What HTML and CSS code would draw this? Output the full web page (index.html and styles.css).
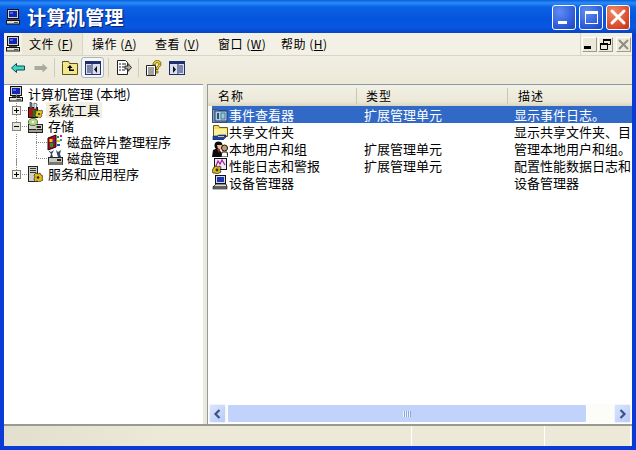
FILE: index.html
```html
<!DOCTYPE html>
<html lang="zh-CN">
<head>
<meta charset="utf-8">
<title>计算机管理</title>
<link rel="stylesheet" href="styles.css">
</head>
<body>
<svg class="defs" width="0" height="0">
  <symbol id="pc" viewBox="0 0 16 16">
    <rect x="2.500" y="0.500" width="11" height="9" fill="#d2d2c8" stroke="#111"/>
    <rect x="4" y="2" width="8" height="6" fill="#1424b4"/>
    <rect x="5" y="3" width="3" height="2" fill="#3f6fe0"/>
    <rect x="4" y="10" width="8" height="1" fill="#444"/>
    <rect x="1.500" y="11.500" width="13" height="3.500" fill="#dcdcd0" stroke="#111"/>
    <rect x="9" y="13" width="4" height="1" fill="#555"/>
  </symbol>
  <symbol id="tools" viewBox="0 0 16 16">
    <rect x="1.500" y="5.500" width="9" height="10" fill="#b01414" stroke="#111"/>
    <rect x="6" y="8" width="4" height="7" fill="#157a28"/>
    <path d="M3 0l2 1v5H3z" fill="#7d8494" stroke="#222" stroke-width=".6"/>
    <path d="M7 1l3 1-1 5H7z" fill="#eee" stroke="#222" stroke-width=".6"/>
    <path d="M10 9l2-1 1 1 2-1 1 3-2 1 1 2-2 2-2-1-2 0-1-2 1-2-1-2z" fill="#e8c414" stroke="#222" stroke-width=".6"/>
    <circle cx="12" cy="12" r="1" fill="#222"/>
  </symbol>
  <symbol id="storage" viewBox="0 0 16 16">
    <rect x="1.500" y="6.500" width="14" height="8" fill="#d2d2c9" stroke="#222"/>
    <rect x="1.500" y="11.500" width="14" height="3" fill="#a0a097" stroke="#222"/>
    <rect x="9" y="8" width="5" height="2" fill="#222"/>
    <ellipse cx="6" cy="4" rx="4.500" ry="3.500" fill="#b4d888" stroke="#56733c"/>
    <circle cx="6" cy="4" r="1" fill="#fff"/>
  </symbol>
  <symbol id="defrag" viewBox="0 0 16 16">
    <path d="M1 4l8-3v12l-8 3z" fill="#a80c20" stroke="#300"/>
    <rect x="2.500" y="5" width="3" height="3" fill="#f4c814"/>
    <rect x="3" y="9" width="3" height="4" fill="#189a36"/>
    <rect x="6" y="6" width="2" height="3" fill="#2030c0"/>
    <rect x="10" y="2" width="2" height="2" fill="#14963a"/>
    <rect x="13" y="1" width="2" height="2" fill="#d414a0"/>
    <rect x="10" y="6" width="3" height="2" fill="#ecc814"/>
    <rect x="10" y="10" width="3" height="2" fill="#1c48d0"/>
    <rect x="13" y="5" width="2" height="2" fill="#14a0c4"/>
  </symbol>
  <symbol id="disk" viewBox="0 0 16 16">
    <rect x="1.500" y="7.500" width="14" height="7" fill="#c7c7bd" stroke="#222"/>
    <rect x="1.500" y="12" width="14" height="3" fill="#77776f"/>
    <path d="M1 0l3 2 3-2-2 4 1 3H3L4 4z" fill="#36466e"/>
    <path d="M9 0l2 2 3-2-1 4 1 3h-3l-1-3z" fill="#36466e"/>
    <rect x="10" y="9" width="4" height="2" fill="#222"/>
  </symbol>
  <symbol id="services" viewBox="0 0 16 16">
    <rect x="1.500" y="0.500" width="9" height="15" fill="#cfcfc6" stroke="#222"/>
    <rect x="3" y="2" width="6" height="1" fill="#333"/>
    <rect x="3" y="4" width="6" height="1" fill="#333"/>
    <rect x="3" y="6" width="6" height="1" fill="#333"/>
    <path d="M9 7l2 1 2-1 1 2 2 1-1 2 1 2-2 1-2 1-2-1-2 1-1-3 1-2-1-2z" fill="#e4bc10" stroke="#222" stroke-width=".7"/>
    <circle cx="11" cy="11.500" r="1.300" fill="#222"/>
  </symbol>
  <symbol id="events" viewBox="0 0 16 16">
    <path d="M0.500 2.500h5l1 1h8v12h-14z" fill="#8698bc" stroke="#3a4e74"/>
    <rect x="3" y="4" width="12" height="10" fill="#b7cbe6" stroke="#1e3e70"/>
    <rect x="5" y="6" width="2" height="6" fill="#1e5e66"/>
    <rect x="9" y="6" width="4" height="6" fill="#8fd0d6" stroke="#1e3e70" stroke-width=".6"/>
  </symbol>
  <symbol id="share" viewBox="0 0 16 16">
    <path d="M1.500 1.500h5l1 2h8v9h-14z" fill="#f4dc5e" stroke="#6d5c14"/>
    <rect x="2" y="5" width="13" height="7" fill="#fdf09a"/>
    <path d="M1 16v-4h4l2-1h7v2l-3 3z" fill="#1c46a8" stroke="#0c1f50" stroke-width=".6"/>
    <rect x="6" y="12" width="6" height="1" fill="#e8bd90"/>
  </symbol>
  <symbol id="users" viewBox="0 0 16 16">
    <circle cx="6.500" cy="4.500" r="4" fill="#0c0c0c"/>
    <path d="M5 4h5v4H6z" fill="#efc294"/>
    <path d="M0 16l1-7 5-2 3 4 1 5z" fill="#0c0c10"/>
    <path d="M5 8l2 4 1-4z" fill="#c81c1c"/>
    <circle cx="12.500" cy="7" r="3" fill="#c59b68" stroke="#111"/>
    <path d="M9 16l1-5h5l1 5z" fill="#fff" stroke="#111"/>
  </symbol>
  <symbol id="perf" viewBox="0 0 16 16">
    <rect x="2.500" y="0.500" width="12" height="11" fill="#ebe9f5" stroke="#111"/>
    <path d="M4 8l2-5 2 3 2-4 3 5" fill="none" stroke="#b0149c" stroke-width="1.200"/>
    <path d="M2 9l2-1 2 1 2-1 1 2-1 2 1 2-2 1-2 1-2-1-2 0-1-2 1-2z" fill="#dcb810" stroke="#111" stroke-width=".7"/>
    <circle cx="5" cy="12" r="1.400" fill="#333"/>
  </symbol>
  <symbol id="device" viewBox="0 0 16 16">
    <rect x="3.500" y="0.500" width="10" height="8" fill="#d3d4dc" stroke="#111"/>
    <rect x="5" y="2" width="7" height="5" fill="#1a38bc"/>
    <path d="M1 12l3-3h10l1 3z" fill="#dcdcd4" stroke="#111" stroke-width=".8"/>
    <rect x="1" y="12" width="14" height="2" fill="#7d7d7d" stroke="#111" stroke-width=".6"/>
  </symbol>
  <symbol id="plus" viewBox="0 0 9 9">
    <rect x=".5" y=".5" width="8" height="8" fill="#f4f3ea" stroke="#84847a"/>
    <path d="M2 4.500h5M4.500 2v5" stroke="#000"/>
  </symbol>
  <symbol id="minus" viewBox="0 0 9 9">
    <rect x=".5" y=".5" width="8" height="8" fill="#e6e4d8" stroke="#84847a"/>
    <path d="M2 4.500h5" stroke="#000"/>
  </symbol>
</svg>

<div class="window">
  <header class="titlebar">
    <svg class="icon title-icon"><use href="#pc"/></svg>
    <span class="title-text">计算机管理</span>
    <div class="caption-buttons">
      <div class="cap cap-blue"><span class="glyph-min"></span></div>
      <div class="cap cap-blue"><span class="glyph-max"></span></div>
      <div class="cap cap-red">
        <svg width="18" height="18" viewBox="0 0 18 18"><path d="M3 3l12 12M15 3L3 15" stroke="#fff" stroke-width="3" stroke-linecap="round"/></svg>
      </div>
    </div>
  </header>

  <div class="frame">
    <nav class="menubar">
      <svg class="icon menu-icon"><use href="#pc"/></svg>
      <div class="menu-item menu-hot">文件 (<u>F</u>)</div>
      <div class="menu-item">操作 (<u>A</u>)</div>
      <div class="menu-item">查看 (<u>V</u>)</div>
      <div class="menu-item">窗口 (<u>W</u>)</div>
      <div class="menu-item">帮助 (<u>H</u>)</div>
      <div class="mdi-buttons">
        <div class="mdi"><svg width="13" height="13" viewBox="0 0 13 13"><rect x="1" y="8" width="7" height="3" fill="#000"/></svg></div>
        <div class="mdi"><svg width="13" height="13" viewBox="0 0 13 13"><path d="M4.500 1.500h7v5h-7z" fill="#ece9d8" stroke="#000"/><path d="M1.500 5.500h7v6h-7z" fill="#ece9d8" stroke="#000"/><path d="M4 2h8M1 6h8" stroke="#000" stroke-width="2"/></svg></div>
        <div class="mdi mdi-off"><svg width="13" height="13" viewBox="0 0 13 13"><path d="M2 2l9 9M11 2l-9 9" stroke="#8d8d84" stroke-width="2"/></svg></div>
      </div>
    </nav>

    <div class="toolbar">
      <div class="tool"><svg width="14" height="10" viewBox="0 0 14 10"><path d="M.5 5l5-4.500v2.500h8v4h-8v2.500z" fill="#43d6c4" stroke="#0b4f55"/></svg></div>
      <div class="tool"><svg width="14" height="10" viewBox="0 0 14 10"><path d="M13.500 5l-5-4.500v2.500h-8v4h8v2.500z" fill="#a9a9a0"/></svg></div>
      <div class="tsep"></div>
      <div class="tool"><svg width="16" height="15" viewBox="0 0 16 15"><path d="M.5 3.500v-2h6l1 2h8v11h-15z" fill="#f4e68c" stroke="#5c5214"/><path d="M8 5l-3 3h2v3h5v-1.500H8.500V8h2z" fill="#000"/></svg></div>
      <div class="tool tool-on"><svg width="16" height="14" viewBox="0 0 16 14"><rect x=".5" y=".5" width="15" height="13" fill="#dcdfee" stroke="#1d2f6e"/><rect x="1" y="1" width="14" height="2" fill="#1d2f6e"/><path d="M7 3v10" stroke="#1d2f6e"/><path d="M2 5h4M2 7h4M2 9h4M2 11h4" stroke="#1d2f6e"/><path d="M12 5v7l-3-3.500z" fill="#111"/></svg></div>
      <div class="tsep tsep-wide"></div>
      <div class="tool"><svg width="16" height="15" viewBox="0 0 16 15"><path d="M1.500.5h8l2 2v12h-10z" fill="#fff" stroke="#222"/><path d="M3 4h2M6 4h4M3 7h2M6 7h3M3 10h2M6 10h3" stroke="#222"/><path d="M9 6h3V3.500l3.500 4-3.500 4V9H9z" fill="#a9a9a0" stroke="#333"/></svg></div>
      <div class="tsep tsep-mid"></div>
      <div class="tool"><svg width="16" height="16" viewBox="0 0 16 16"><path d="M.5 5.500h9v10h-9z" fill="#fff" stroke="#222"/><path d="M2 8h6M2 10h6M2 12h6M2 14h6" stroke="#444"/><path d="M7 5c0-6 8-6 8-1 0 3-3 2.500-3 5.500h-2c0-3.500 3-3.500 3-5.500 0-2-3.500-2-4 1z" fill="#f2d21f" stroke="#5a4a00" stroke-width=".8"/><rect x="10" y="11" width="2" height="2" fill="#f2d21f" stroke="#5a4a00" stroke-width=".6"/></svg></div>
      <div class="tool"><svg width="16" height="14" viewBox="0 0 16 14"><rect x=".5" y=".5" width="15" height="13" fill="#dcdfee" stroke="#1d2f6e"/><rect x="1" y="1" width="14" height="2" fill="#1d2f6e"/><path d="M9 3v10" stroke="#1d2f6e"/><path d="M10 5h4M10 7h4M10 9h4M10 11h4" stroke="#1d2f6e"/><path d="M4 5v7l3-3.500z" fill="#111"/></svg></div>
    </div>

    <main class="panes">
      <aside class="tree">
        <div class="node root"><svg class="icon"><use href="#pc"/></svg><span class="label">计算机管理 (本地)</span></div>
        <div class="node lvl1"><svg class="exp"><use href="#plus"/></svg><svg class="icon"><use href="#tools"/></svg><span class="label label-hot">系统工具</span></div>
        <div class="node lvl1"><svg class="exp"><use href="#minus"/></svg><svg class="icon"><use href="#storage"/></svg><span class="label">存储</span></div>
        <div class="node lvl2"><svg class="icon"><use href="#defrag"/></svg><span class="label">磁盘碎片整理程序</span></div>
        <div class="node lvl2"><svg class="icon"><use href="#disk"/></svg><span class="label">磁盘管理</span></div>
        <div class="node lvl1"><svg class="exp"><use href="#plus"/></svg><svg class="icon"><use href="#services"/></svg><span class="label">服务和应用程序</span></div>
      </aside>
      <div class="splitter"></div>
      <section class="list">
        <div class="list-head">
          <div class="col-h col-name">名称</div>
          <div class="col-h col-type">类型</div>
          <div class="col-h col-desc">描述</div>
        </div>
        <div class="rows">
          <div class="row row-sel"><div class="c-name"><svg class="icon"><use href="#events"/></svg><span class="c-text">事件查看器</span></div><div class="c-type">扩展管理单元</div><div class="c-desc">显示事件日志。</div></div>
          <div class="row"><div class="c-name"><svg class="icon"><use href="#share"/></svg><span class="c-text">共享文件夹</span></div><div class="c-type"></div><div class="c-desc">显示共享文件夹、目</div></div>
          <div class="row"><div class="c-name"><svg class="icon"><use href="#users"/></svg><span class="c-text">本地用户和组</span></div><div class="c-type">扩展管理单元</div><div class="c-desc">管理本地用户和组。</div></div>
          <div class="row"><div class="c-name"><svg class="icon"><use href="#perf"/></svg><span class="c-text">性能日志和警报</span></div><div class="c-type">扩展管理单元</div><div class="c-desc">配置性能数据日志和</div></div>
          <div class="row"><div class="c-name"><svg class="icon"><use href="#device"/></svg><span class="c-text">设备管理器</span></div><div class="c-type"></div><div class="c-desc">设备管理器</div></div>
        </div>
        <div class="hscroll">
          <div class="sb-btn"><svg width="9" height="10" viewBox="0 0 9 10"><path d="M6.500 1l-4 4 4 4" fill="none" stroke="#3f5180" stroke-width="2.200"/></svg></div>
          <div class="sb-thumb"><span class="grip"></span></div>
          <div class="sb-track"></div>
          <div class="sb-btn"><svg width="9" height="10" viewBox="0 0 9 10"><path d="M2.500 1l4 4-4 4" fill="none" stroke="#3f5180" stroke-width="2.200"/></svg></div>
        </div>
      </section>
    </main>

    <footer class="status">
      <div class="st st-a"></div>
      <div class="st st-b"></div>
      <div class="st st-c"></div>
    </footer>
  </div>
</div>
</body>
</html>
```
FILE: styles.css
```css
* { box-sizing: border-box; }
html, body { margin: 0; padding: 0; }
body { width: 636px; height: 450px; overflow: hidden; background: #0a3bd6; font: 13px/16px "Noto Sans CJK SC", "Liberation Sans", sans-serif; color: #000; }
.defs { display: block; height: 0; }
.icon { width: 16px; height: 16px; flex: none; display: block; }

.window { width: 636px; height: 450px; display: flex; flex-direction: column; }

.titlebar { height: 33px; flex: none; display: flex; align-items: center; padding: 1px 6px 0 5px;
  background: linear-gradient(180deg, #0a5de0 0, #2b8cf5 3px, #0a62e6 7px, #0654dd 18px, #0757e0 27px, #0747c8 32px); }
.title-icon { margin: 0 6px 0 0; }
.title-text { color: #fff; font-size: 19px; line-height: 24px; font-weight: 700; letter-spacing: .4px; text-shadow: 1px 1px 1px #0f1f70; }
.caption-buttons { margin-left: auto; display: flex; gap: 3px; }
.cap { width: 24px; height: 25px; border: 1px solid #fff; border-radius: 3px; display: flex; align-items: center; justify-content: center; position: relative; }
.cap-blue { background: radial-gradient(circle at 30% 25%, #5f8cf0, #2a57d8 70%, #1d43b8); }
.cap-red { background: radial-gradient(circle at 30% 25%, #ee8a66, #d9482a 70%, #b8341c); }
.glyph-min { width: 9px; height: 3px; background: #fff; position: absolute; left: 5px; bottom: 5px; }
.glyph-max { width: 13px; height: 13px; border: 1px solid #fff; border-top-width: 3px; }

.frame { flex: 1; min-height: 0; margin: 0 4px 4px 4px; background: #ece9d8; display: flex; flex-direction: column; }

.menubar { height: 23px; flex: none; display: flex; align-items: center; background: #f3f1e6; border-bottom: 1px solid #d8d5c2; padding-left: 1px; }
.menu-icon { margin-right: 1px; }
.menu-item { width: 63px; height: 22px; padding-left: 7px; line-height: 22px; font-size: 12px; letter-spacing: .5px; white-space: nowrap; }
.menu-item u { text-underline-offset: 1px; }
.menu-hot { background: #ece9d8; border-right: 1px solid #d8d5c2; width: 61px; margin-right: 2px; }
.mdi-buttons { margin-left: auto; display: flex; gap: 1px; padding-right: 1px; border-left: 1px solid #d8d5c2; padding-left: 1px; height: 22px; align-items: center; }
.mdi { width: 15px; height: 15px; background: #ece9d8; border: 1px solid; border-color: #fff #9d9b8c #9d9b8c #fff; display: flex; align-items: center; justify-content: center; }
.mdi-off { margin-left: 2px; }

.toolbar { height: 28px; flex: none; display: flex; align-items: center; padding: 0 0 5px 2px; background: linear-gradient(180deg, #f0eee2, #ece9d8); }
.tool { width: 23px; height: 21px; display: flex; align-items: center; justify-content: center; }
.tool-on { background: #f7f7f3; border: 1px solid #a8b2c8; border-radius: 3px; }
.tsep { width: 1px; height: 19px; background: #cfccb8; margin: 0 3px 0 2px; }
.tsep-wide { margin: 0 3px 0 4px; }
.tsep-mid { margin: 0 3px 0 3px; }

.panes { flex: 1; min-height: 0; display: flex; border-bottom: 2px solid #9b9a90; }
.tree { width: 199px; flex: none; background: #fff; padding-top: 1px; border-top: 1px solid #8f9aa8; overflow: hidden; }
.splitter { width: 4px; flex: none; background: #ece9d8; }
.list { flex: 1; min-width: 0; background: #fff; display: flex; flex-direction: column; border-top: 1px solid #8f9aa8; border-left: 1px solid #8f9aa8; }

.node { height: 16px; display: flex; align-items: center; position: relative; white-space: nowrap; font-size: 13px; }
.root { padding-left: 4px; }
.root .label { margin-left: 4px; padding: 0 1px 0 0; }
.lvl1 { padding-left: 23px; }
.lvl1 .label { margin-left: 5px; }
.lvl1 .label-hot { margin-left: 3px; padding: 0 2px; background: #f1efe4; }
.lvl2 { padding-left: 43px; background: repeating-linear-gradient(180deg, #8f8f86 0 1px, transparent 1px 2px) 12px 0 / 1px 100% no-repeat; }
.label { margin-left: 4px; padding: 0 1px 0 0; }
.exp { position: absolute; left: 8px; top: 4px; width: 9px; height: 9px; display: block; z-index: 1; }
.lvl1::before { content: ""; position: absolute; left: 12px; top: -8px; height: 16px; border-left: 1px dotted #8f8f86; }
.lvl1::after { content: ""; position: absolute; left: 12px; top: 8px; width: 11px; border-top: 1px dotted #8f8f86; }
.lvl2::before { content: ""; position: absolute; left: 32px; top: -8px; height: 16px; border-left: 1px dotted #8f8f86; }
.lvl2::after { content: ""; position: absolute; left: 32px; top: 8px; width: 11px; border-top: 1px dotted #8f8f86; }

.list-head { height: 21px; flex: none; display: flex; background: linear-gradient(180deg, #f3f1e5, #ebe8d8 80%, #d9d5c2); font-size: 12px; line-height: 22px; }
.col-h { padding-left: 10px; position: relative; letter-spacing: 1px; }
.col-name { width: 149px; }
.col-type { width: 151px; padding-left: 9px; }
.col-desc { flex: 1; padding-left: 10px; }
.col-name::after, .col-type::after { content: ""; position: absolute; right: 0; top: 3px; height: 16px; border-right: 1px solid #c9c6b4; }

.rows { flex: 1; min-height: 0; padding: 0 0 0 4px; overflow: hidden; }
.row { height: 17px; display: flex; align-items: center; white-space: nowrap; overflow: hidden; font-size: 13px; line-height: 17px; width: 420px; }
.row-sel { background: #3169c6; color: #fff; }
.c-name { width: 152px; flex: none; display: flex; align-items: center; }
.c-text { margin-left: 1px; }
.c-type { width: 150px; flex: none; }
.c-desc { flex: none; }

.hscroll { height: 19px; flex: none; margin: 0 1px 1px 1px; display: flex; align-items: stretch; gap: 1px; background: #fcfcf8; }
.sb-btn { width: 17px; flex: none; background: linear-gradient(135deg, #dbe6fd, #b6cafa); border: 1px solid #eef3ff; border-radius: 2px; display: flex; align-items: center; justify-content: center; }
.sb-thumb { width: 360px; flex: none; background: #c1d3fb; border: 1px solid #fff; border-radius: 2px; display: flex; align-items: center; justify-content: center; }
.grip { width: 8px; height: 6px; background: repeating-linear-gradient(90deg, #eef3fe 0 1px, #8fa6d8 1px 2px); }
.sb-track { flex: 1; }

.status { height: 20px; flex: none; display: flex; background: #ece9d8; }
.st { height: 20px; border-right: 1px solid #fff; }
.st-a { width: 408px; background: linear-gradient(90deg, #e2dfcf, #ece9d8 40%); }
.st-b { width: 133px; }
.st-c { width: 86px; }
```
